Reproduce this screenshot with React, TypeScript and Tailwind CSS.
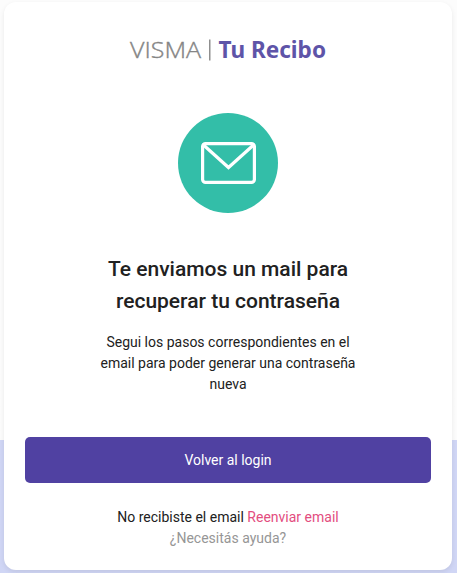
import React from 'react';

const Logo: React.FC = () => (
  <svg width="200" height="36" viewBox="0 0 200 36" role="img" aria-label="VISMA Tu Recibo">
    <text
      x="2"
      y="25.5"
      textLength="71"
      lengthAdjust="spacingAndGlyphs"
      className="fill-[#858585] stroke-[#858585] font-['Open_Sans',sans-serif] text-[22px] font-light [stroke-width:0.35px]"
    >
      VISMA
    </text>
    <rect x="81" y="7.5" width="1.5" height="21" className="fill-[#8f8f8f]" />
    <text
      x="90.5"
      y="25.5"
      textLength="107.5"
      lengthAdjust="spacingAndGlyphs"
      className="fill-[#5e54a8] font-['Noto_Sans',sans-serif] text-[22.5px] font-bold"
    >
      Tu Recibo
    </text>
  </svg>
);

const MailIcon: React.FC = () => (
  <div className="flex h-[100px] w-[100px] items-center justify-center rounded-full bg-[#33bea8]">
    <svg
      width="56"
      height="44"
      viewBox="0 0 56 44"
      fill="none"
      stroke="white"
      strokeWidth="3.2"
      strokeLinejoin="round"
      strokeLinecap="round"
    >
      <rect x="2.6" y="2.6" width="51.8" height="38.8" rx="3" />
      <path d="M3.5 4L28.5 26.5L53.5 4" strokeLinejoin="miter" />
    </svg>
  </div>
);

export default function App() {
  return (
    <div className="min-h-[573px] bg-linear-to-b from-[#fcfcfc] from-[440px] to-[#d0d6f5] to-[440px] pt-0.5 pr-[5px] pb-[3px] pl-1 font-[Roboto,sans-serif]">
      <div className="flex h-[568px] flex-col items-center rounded-xl bg-white px-[21px] pt-[30px] text-center text-sm leading-[21px] text-[#212121] shadow-[0_2px_5px_rgba(0,0,0,0.08)]">
        <Logo />

        <div className="mt-[45px]">
          <MailIcon />
        </div>

        <h1 className="mt-10 w-[260px] text-[21px] leading-8 font-medium">
          Te enviamos un mail para recuperar tu contraseña
        </h1>
        <p className="mt-[15px] w-[270px]">
          Segui los pasos correspondientes en el email para poder generar una contraseña nueva
        </p>

        <button
          type="button"
          className="mt-[42px] h-[46px] w-full shrink-0 rounded-[5px] bg-[#5041a2] text-sm text-white"
        >
          Volver al login
        </button>

        <div className="mt-6">
          <p>
            No recibiste el email{' '}
            <a href="#" className="text-[#e34d80]">
              Reenviar email
            </a>
          </p>
          <a href="#" className="block text-[#969696]">
            ¿Necesitás ayuda?
          </a>
        </div>
      </div>
    </div>
  );
}
